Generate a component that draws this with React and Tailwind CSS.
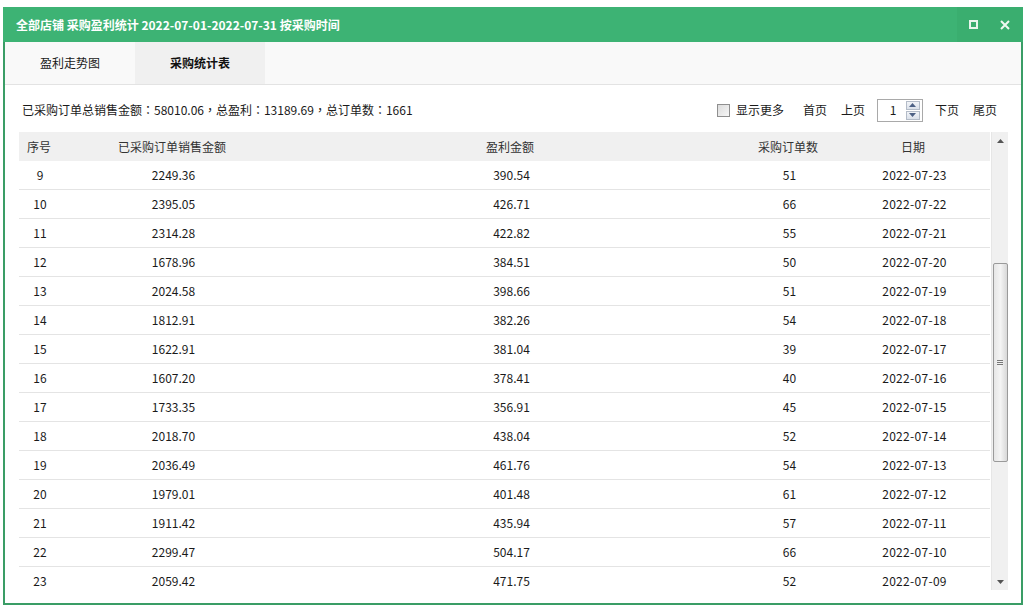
import React from "react";

const rows = [
  [9, "2249.36", "390.54", 51, "2022-07-23"],
  [10, "2395.05", "426.71", 66, "2022-07-22"],
  [11, "2314.28", "422.82", 55, "2022-07-21"],
  [12, "1678.96", "384.51", 50, "2022-07-20"],
  [13, "2024.58", "398.66", 51, "2022-07-19"],
  [14, "1812.91", "382.26", 54, "2022-07-18"],
  [15, "1622.91", "381.04", 39, "2022-07-17"],
  [16, "1607.20", "378.41", 40, "2022-07-16"],
  [17, "1733.35", "356.91", 45, "2022-07-15"],
  [18, "2018.70", "438.04", 52, "2022-07-14"],
  [19, "2036.49", "461.76", 54, "2022-07-13"],
  [20, "1979.01", "401.48", 61, "2022-07-12"],
  [21, "1911.42", "435.94", 57, "2022-07-11"],
  [22, "2299.47", "504.17", 66, "2022-07-10"],
  [23, "2059.42", "471.75", 52, "2022-07-09"],
];

const font = { fontFamily: '"Noto Sans CJK SC", "Noto Sans", sans-serif' };

export default function App() {
  return (
    <div className="w-[1036px] h-[613px] bg-white pt-[7px] pl-[3px] text-[12px] text-[#1a1a1a]" style={font}>
      <div className="w-[1020px] h-[598px] border-2 border-t-0 border-[#3a9d66] flex flex-col bg-white">
        {/* title bar */}
        <div className="h-[35px] -mx-[2px] bg-[#3db374] flex items-center shrink-0">
          <div className="pl-[13px] text-white font-bold text-[12px] flex-1 leading-none">
            全部店铺 采购盈利统计 2022-07-01-2022-07-31 按采购时间
          </div>
          <div className="flex h-full">
            <div className="w-[32px] h-full bg-[#3aae6f] flex items-center justify-center">
              <div className="w-[9px] h-[9px] border-2 border-[#e8f5ec]" />
            </div>
            <div className="w-[34px] h-full bg-[#3aae6f] flex items-center justify-center pr-[2px]">
              <svg width="10" height="10" viewBox="0 0 10 10">
                <path d="M1 1 L9 9 M9 1 L1 9" stroke="#eef8f1" strokeWidth="2" />
              </svg>
            </div>
          </div>
        </div>
        {/* tabs */}
        <div className="h-[43px] bg-[#f9f9f9] border-b border-[#e3e3e3] flex shrink-0">
          <div className="w-[130px] flex items-center justify-center">盈利走势图</div>
          <div className="w-[130px] flex items-center justify-center bg-[#f0f0f0] font-bold text-[#111]">采购统计表</div>
        </div>
        {/* content */}
        <div className="flex-1 flex flex-col px-[14px] pt-[13px] min-h-0">
          <div className="h-[24px] flex items-center shrink-0">
            <div className="pl-[3px] flex-1" style={{ fontFamily: '"Noto Sans CJK TC", "Noto Sans CJK SC", sans-serif' }}>
              已采购订单总销售金额：58010.06，总盈利：13189.69，总订单数：1661
            </div>
            <div className="flex items-center pr-[10px]">
              <div className="w-[13px] h-[13px] border border-[#8f8f8f] bg-gradient-to-br from-[#dcdcdc] to-[#f7f7f7]" />
              <span className="ml-[6px]">显示更多</span>
              <span className="ml-[19px]">首页</span>
              <span className="ml-[14px]">上页</span>
              <div className="ml-[12px] w-[46px] h-[23px] border border-[#a9a9a9] flex items-center bg-white">
                <span className="flex-1 text-center pl-[2px]">1</span>
                <div className="w-[14px] h-[19px] mr-[2px] flex flex-col gap-[1px]">
                  <div className="flex-1 border border-[#b4bcc8] bg-gradient-to-b from-[#f2f4f8] to-[#dbe1ea] flex items-center justify-center">
                    <svg width="7" height="4" viewBox="0 0 7 4"><path d="M3.5 0 L7 4 L0 4Z" fill="#4d6185" /></svg>
                  </div>
                  <div className="flex-1 border border-[#b4bcc8] bg-gradient-to-b from-[#f2f4f8] to-[#dbe1ea] flex items-center justify-center">
                    <svg width="7" height="4" viewBox="0 0 7 4"><path d="M0 0 L7 0 L3.5 4Z" fill="#4d6185" /></svg>
                  </div>
                </div>
              </div>
              <span className="ml-[12px]">下页</span>
              <span className="ml-[14px]">尾页</span>
            </div>
          </div>
          <div className="mt-[10px] flex h-[458px] w-[989px]">
            <div className="w-[972px] flex flex-col">
              <div className="h-[29px] bg-[#f0f0f0] grid grid-cols-[40px_226px_450px_106px_144px_1fr] items-center text-center text-[#333] shrink-0">
                <div>序号</div>
                <div>已采购订单销售金额</div>
                <div>盈利金额</div>
                <div>采购订单数</div>
                <div>日期</div>
                <div />
              </div>
              <div className="flex-1 overflow-hidden">
                {rows.map((r) => (
                  <div
                    key={r[0]}
                    className="h-[29px] border-b border-[#e4e4e4] grid grid-cols-[40px_226px_450px_106px_144px_1fr] items-center text-center"
                  >
                    <div className="pl-[2px]">{r[0]}</div>
                    <div className="pl-[3px]">{r[1]}</div>
                    <div className="pl-[3px]">{r[2]}</div>
                    <div className="pl-[3px]">{r[3]}</div>
                    <div className="pl-[3px] tracking-[0.3px]">{r[4]}</div>
                    <div />
                  </div>
                ))}
              </div>
            </div>
            <div className="w-[17px] ml-[1px] bg-[#f0f0f0] border-l border-[#e6e6e6] flex flex-col items-center">
              <div className="h-[17px] flex items-center justify-center">
                <svg width="7" height="4" viewBox="0 0 7 4"><path d="M3.5 0 L7 4 L0 4Z" fill="#555" /></svg>
              </div>
              <div className="mt-[114px] w-[15px] h-[199px] rounded-[2px] border border-[#9a9a9a] bg-gradient-to-r from-[#e6e6e6] via-[#f4f4f4] to-[#d8d8d8] flex items-center justify-center">
                <div className="flex flex-col gap-[1px]">
                  <div className="w-[6px] h-px bg-[#777]" />
                  <div className="w-[6px] h-px bg-[#777]" />
                  <div className="w-[6px] h-px bg-[#777]" />
                </div>
              </div>
              <div className="flex-1" />
              <div className="h-[17px] flex items-center justify-center">
                <svg width="7" height="4" viewBox="0 0 7 4"><path d="M0 0 L7 0 L3.5 4Z" fill="#555" /></svg>
              </div>
            </div>
          </div>
        </div>
      </div>
    </div>
  );
}
